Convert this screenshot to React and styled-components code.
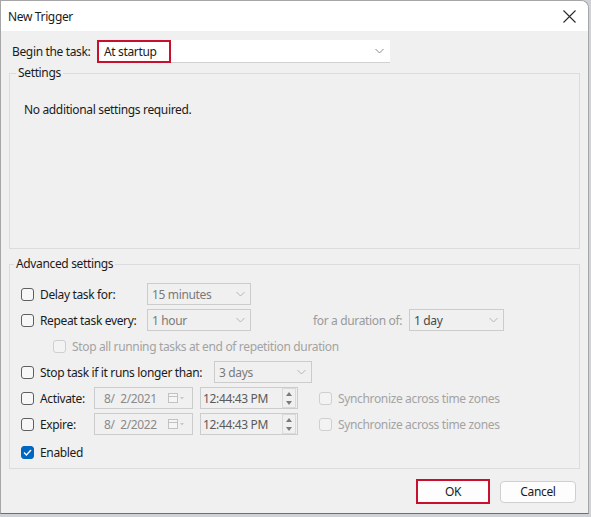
import React from "react";
import styled, { createGlobalStyle } from "styled-components";

const GlobalStyle = createGlobalStyle`
  body {
    margin: 0;
    background: #cfd3d8;
    font-family: "Noto Sans", "Open Sans", sans-serif;
    font-size: 12px;
    letter-spacing: -0.35px;
    color: #1b1b1b;
  }
`;

const Window = styled.div`
  width: 587px;
  height: 512px;
  border: 1px solid #a6a6a6;
  border-bottom-color: #6e6e6e;
  border-top-right-radius: 8px;
  overflow: hidden;
  display: flex;
  flex-direction: column;
  background: #f0f0f0;
`;

const TitleBar = styled.div`
  height: 30px;
  background: #ffffff;
  display: flex;
  align-items: center;
  justify-content: space-between;
  padding: 0 7px 0 7px;
  font-size: 12px;
`;

const CloseButton = styled.div`
  width: 20px;
  height: 20px;
  display: flex;
  align-items: center;
  justify-content: center;
  margin-right: 2px;
`;

const Body = styled.div`
  flex: 1;
  padding: 9px 0 0 8px;
  display: flex;
  flex-direction: column;
`;

const BeginRow = styled.div`
  display: flex;
  align-items: center;
  height: 23px;
  padding-left: 3px;
`;

const BeginLabel = styled.span`
  width: 85px;
`;

const BigSelect = styled.div`
  width: 293px;
  height: 23px;
  box-sizing: border-box;
  background: #ffffff;
  border-bottom: 1px solid #d0d0d0;
  display: flex;
  align-items: center;
  justify-content: space-between;
  padding-right: 6px;
`;

const Highlight = styled.span`
  height: 23px;
  width: 74px;
  box-sizing: border-box;
  border: 2px solid #c8102e;
  display: flex;
  align-items: center;
  padding-left: 5px;
`;

const Group = styled.fieldset`
  width: 571px;
  box-sizing: border-box;
  height: ${(p) => p.$height}px;
  margin: ${(p) => p.$top}px 0 0 0;
  border: 1px solid #dcdcdc;
  padding: 0 0 0 ${(p) => p.$pad}px;
  min-width: 0;
`;

const Legend = styled.legend`
  padding: 0 2px;
  margin-left: ${(p) => p.$offset}px;
  line-height: 16px;
`;

const Note = styled.div`
  margin-top: 20px;
`;

const Rows = styled.div`
  padding-top: 9px;
  display: flex;
  flex-direction: column;
`;

const Row = styled.div`
  display: flex;
  align-items: center;
  height: 26px;
  margin-top: ${(p) => p.$top || 0}px;
  padding-left: ${(p) => p.$indent || 0}px;
`;

const CheckField = styled.label`
  display: flex;
  align-items: center;
  width: ${(p) => (p.$width ? `${p.$width}px` : "auto")};
  color: ${(p) => (p.$disabled ? "#a3a3a3" : "#1b1b1b")};
`;

const Box = styled.span`
  width: 13px;
  height: 13px;
  box-sizing: border-box;
  border-radius: 3px;
  margin-right: 6px;
  flex-shrink: 0;
  display: flex;
  align-items: center;
  justify-content: center;
  border: 1px solid ${(p) => (p.$checked ? "#0067c0" : p.$disabled ? "#cfcfcf" : "#5f5f5f")};
  background: ${(p) => (p.$checked ? "#0067c0" : p.$disabled ? "#f3f3f3" : "#f7f7f7")};
`;

const Combo = styled.div`
  width: ${(p) => p.$width}px;
  height: 22px;
  box-sizing: border-box;
  border: 1px solid #cccccc;
  background: #f0f0f0;
  display: flex;
  align-items: center;
  justify-content: space-between;
  padding: 0 5px 0 4px;
  color: ${(p) => (p.$dark ? "#4a4a4a" : "#7a7a7a")};
  margin-left: ${(p) => p.$left || 0}px;
`;

const Muted = styled.span`
  color: #9a9a9a;
  margin-left: ${(p) => p.$left || 0}px;
  width: ${(p) => (p.$width ? `${p.$width}px` : "auto")};
`;

const DateBox = styled(Combo)`
  padding: 0 5px 0 9px;
  color: #8a8a8a;
`;

const TimeBox = styled(Combo)`
  padding: 0 1px 0 2px;
  color: #5a5a5a;
`;

const Spin = styled.div`
  width: 12px;
  height: 18px;
  border: 1px solid #dadada;
  display: flex;
  flex-direction: column;
  align-items: center;
  justify-content: space-around;
`;

const Footer = styled.div`
  display: flex;
  justify-content: flex-end;
  align-items: center;
  gap: 10px;
  padding: 10px 12px 0 0;
`;

const Button = styled.button`
  font-family: inherit;
  font-size: 12px;
  letter-spacing: -0.35px;
  color: #1b1b1b;
  width: ${(p) => p.$width}px;
  height: ${(p) => (p.$primary ? 25 : 22)}px;
  background: #fdfdfd;
  border-radius: ${(p) => (p.$primary ? 0 : 4)}px;
  border: ${(p) => (p.$primary ? "2px solid #c8102e" : "1px solid #cfcfcf")};
  padding: 0;
`;

const Chevron = ({ color = "#8a8a8a" }) => (
  <svg width="9" height="6" viewBox="0 0 9 6">
    <path d="M0.5 1 L4.5 5 L8.5 1" fill="none" stroke={color} strokeWidth="1" />
  </svg>
);

const Check = ({ checked, disabled, children, width }) => (
  <CheckField $width={width} $disabled={disabled}>
    <Box $checked={checked} $disabled={disabled}>
      {checked && (
        <svg width="9" height="7" viewBox="0 0 9 7">
          <path d="M1 3.5 L3.4 6 L8 1" fill="none" stroke="#fff" strokeWidth="1.3" />
        </svg>
      )}
    </Box>
    {children}
  </CheckField>
);

const CalendarIcon = () => (
  <svg width="20" height="12" viewBox="0 0 20 12">
    <rect x="1.5" y="1.5" width="9" height="9" fill="#f5f5f5" stroke="#c2c2c2" />
    <path d="M2 4.5 H10" stroke="#c2c2c2" />
    <path d="M13 5 L17 5 L15 7.5 Z" fill="#c8c8c8" />
  </svg>
);

const TimeField = ({ value }) => (
  <TimeBox $width={98} $left={7}>
    <span>{value}</span>
    <Spin>
      <svg width="6" height="4" viewBox="0 0 6 4">
        <path d="M0 4 L3 0 L6 4 Z" fill="#7a7a7a" />
      </svg>
      <svg width="6" height="4" viewBox="0 0 6 4">
        <path d="M0 0 L3 4 L6 0 Z" fill="#7a7a7a" />
      </svg>
    </Spin>
  </TimeBox>
);

export default function App() {
  return (
    <>
      <GlobalStyle />
      <Window>
        <TitleBar>
          <span>New Trigger</span>
          <CloseButton>
            <svg width="13" height="13" viewBox="0 0 13 13">
              <path d="M0.5 0.5 L12.5 12.5 M12.5 0.5 L0.5 12.5" stroke="#2a2a2a" strokeWidth="1.1" />
            </svg>
          </CloseButton>
        </TitleBar>
        <Body>
          <BeginRow>
            <BeginLabel>Begin the task:</BeginLabel>
            <BigSelect>
              <Highlight>At startup</Highlight>
              <Chevron />
            </BigSelect>
          </BeginRow>

          <Group $top={2} $height={184} $pad={14}>
            <Legend $offset={-8}>Settings</Legend>
            <Note>No additional settings required.</Note>
          </Group>

          <Group $top={7} $height={213} $pad={11}>
            <Legend $offset={-7}>Advanced settings</Legend>
            <Rows>
              <Row>
                <Check width={126}>Delay task for:</Check>
                <Combo $width={104}>
                  <span>15 minutes</span>
                  <Chevron color="#b5b5b5" />
                </Combo>
              </Row>
              <Row>
                <Check width={126}>Repeat task every:</Check>
                <Combo $width={104}>
                  <span>1 hour</span>
                  <Chevron color="#b5b5b5" />
                </Combo>
                <Muted $left={62} $width={96}>for a duration of:</Muted>
                <Combo $width={95} $dark>
                  <span>1 day</span>
                  <Chevron color="#b5b5b5" />
                </Combo>
              </Row>
              <Row $indent={32}>
                <Check disabled>Stop all running tasks at end of repetition duration</Check>
              </Row>
              <Row>
                <Check width={193}>Stop task if it runs longer than:</Check>
                <Combo $width={98}>
                  <span>3 days</span>
                  <Chevron color="#b5b5b5" />
                </Combo>
              </Row>
              <Row>
                <Check width={73}>Activate:</Check>
                <DateBox $width={99}>
                  <span>8/&nbsp; 2/2021</span>
                  <CalendarIcon />
                </DateBox>
                <TimeField value="12:44:43 PM" />
                <Muted $left={21}>
                  <Check disabled>Synchronize across time zones</Check>
                </Muted>
              </Row>
              <Row>
                <Check width={73}>Expire:</Check>
                <DateBox $width={99}>
                  <span>8/&nbsp; 2/2022</span>
                  <CalendarIcon />
                </DateBox>
                <TimeField value="12:44:43 PM" />
                <Muted $left={21}>
                  <Check disabled>Synchronize across time zones</Check>
                </Muted>
              </Row>
              <Row $top={2}>
                <Check checked>Enabled</Check>
              </Row>
            </Rows>
          </Group>

          <Footer>
            <Button $primary $width={74}>OK</Button>
            <Button $width={76}>Cancel</Button>
          </Footer>
        </Body>
      </Window>
    </>
  );
}
